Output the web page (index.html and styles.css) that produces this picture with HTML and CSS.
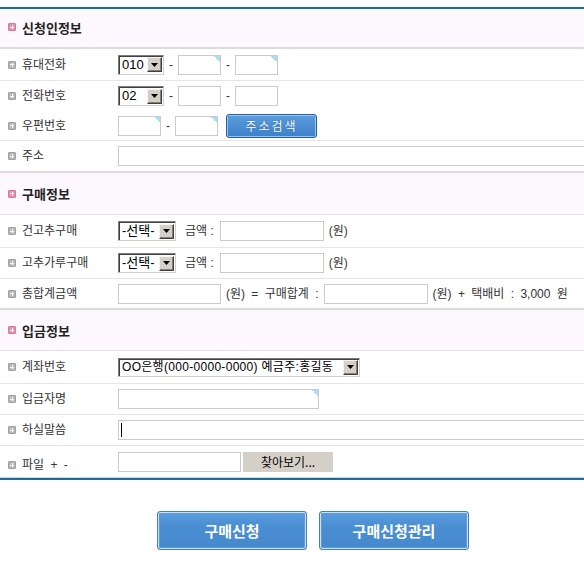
FILE: index.html
```html
<!DOCTYPE html>
<html lang="ko">
<head>
<meta charset="utf-8">
<title>구매신청</title>
<link rel="stylesheet" href="styles.css">
</head>
<body>
<div class="page">
  <div class="form">
    <div class="sec-head sh1"><span class="ico pink"></span>신청인정보</div>

    <div class="row h32 line">
      <div class="label"><span class="ico"></span>휴대전화</div>
      <div class="field">
        <div class="sel w46"><span class="sel-text">010</span><span class="arrow"><svg width="7" height="4" viewBox="0 0 7 4"><path d="M0 0h7L3.5 4z" fill="#000"/></svg></span></div>
        <span class="dash">-</span>
        <input class="inp w43 tri" type="text">
        <span class="dash">-</span>
        <input class="inp w43 tri" type="text">
      </div>
    </div>

    <div class="row h30">
      <div class="label"><span class="ico"></span>전화번호</div>
      <div class="field">
        <div class="sel w46"><span class="sel-text">02</span><span class="arrow"><svg width="7" height="4" viewBox="0 0 7 4"><path d="M0 0h7L3.5 4z" fill="#000"/></svg></span></div>
        <span class="dash">-</span>
        <input class="inp w43" type="text">
        <span class="dash">-</span>
        <input class="inp w43" type="text">
      </div>
    </div>

    <div class="row h30 line">
      <div class="label"><span class="ico"></span>우편번호</div>
      <div class="field">
        <input class="inp w43 tri" type="text">
        <span class="dash">-</span>
        <input class="inp w43 tri" type="text">
        <button class="btn-zip" type="button">주소검색</button>
      </div>
    </div>

    <div class="row h32 line2">
      <div class="label"><span class="ico"></span>주소</div>
      <div class="field">
        <input class="inp wlong" type="text">
      </div>
    </div>

    <div class="sec-head sh2"><span class="ico pink"></span>구매정보</div>

    <div class="row h33 line">
      <div class="label"><span class="ico"></span>건고추구매</div>
      <div class="field">
        <div class="sel w58"><span class="sel-text">-선택-</span><span class="arrow"><svg width="7" height="4" viewBox="0 0 7 4"><path d="M0 0h7L3.5 4z" fill="#000"/></svg></span></div>
        <span class="txt amt">금액 :</span>
        <input class="inp w104" type="text">
        <span class="txt won">(원)</span>
      </div>
    </div>

    <div class="row h31 line">
      <div class="label"><span class="ico"></span>고추가루구매</div>
      <div class="field">
        <div class="sel w58"><span class="sel-text">-선택-</span><span class="arrow"><svg width="7" height="4" viewBox="0 0 7 4"><path d="M0 0h7L3.5 4z" fill="#000"/></svg></span></div>
        <span class="txt amt">금액 :</span>
        <input class="inp w104" type="text">
        <span class="txt won">(원)</span>
      </div>
    </div>

    <div class="row h31 line2">
      <div class="label"><span class="ico"></span>총합계금액</div>
      <div class="field">
        <input class="inp w103" type="text">
        <span class="txt sum wide">(원) = 구매합계 :</span>
        <input class="inp w104" type="text">
        <span class="txt won wide">(원) + 택배비 : 3,000 원</span>
      </div>
    </div>

    <div class="sec-head sh3"><span class="ico pink"></span>입금정보</div>

    <div class="row h33 line">
      <div class="label"><span class="ico"></span>계좌번호</div>
      <div class="field">
        <div class="sel w242 h19"><span class="sel-text acct">OO은행(000-0000-0000) 예금주:홍길동</span><span class="arrow"><svg width="7" height="4" viewBox="0 0 7 4"><path d="M0 0h7L3.5 4z" fill="#000"/></svg></span></div>
      </div>
    </div>

    <div class="row h31 line">
      <div class="label"><span class="ico"></span>입금자명</div>
      <div class="field">
        <input class="inp w201 tri" type="text">
      </div>
    </div>

    <div class="row h31 line">
      <div class="label"><span class="ico"></span>하실말씀</div>
      <div class="field">
        <div class="inp wlong memo"><span class="caret"></span></div>
      </div>
    </div>

    <div class="row h32 last">
      <div class="label low wide"><span class="ico"></span>파일 + -</div>
      <div class="field">
        <input class="inp w123" type="text">
        <button class="btn-find" type="button">찾아보기...</button>
      </div>
    </div>
  </div>

  <div class="actions">
    <button class="btn-big" type="button">구매신청</button>
    <button class="btn-big" type="button">구매신청관리</button>
  </div>
</div>
</body>
</html>
```

FILE: styles.css
```css
html, body {
  margin: 0;
  padding: 0;
  overflow: hidden;
  background: #fff;
}

.page {
  width: 584px;
  overflow: hidden;
  padding-top: 7px;
  font-family: "Liberation Sans", "Noto Sans CJK KR", sans-serif;
  font-size: 12px;
  color: #333;
}

.form {
  width: 626px;
  border-top: 2px solid #1b6e97;
  border-bottom: 2px solid #1b6e97;
}

.sec-head {
  display: flex;
  align-items: center;
  box-sizing: border-box;
  padding-left: 8px;
  background: #fdf8fd;
  font-size: 13px;
  font-weight: bold;
  color: #222;
}

.sh1 { height: 40px; border-bottom: 2px solid #dddada; padding-bottom: 2px; }
.sh2 { height: 42px; border-bottom: 1px solid #e2e0e2; }
.sh3 { height: 41px; border-bottom: 1px solid #e2e0e2; }

.ico {
  display: inline-block;
  box-sizing: border-box;
  width: 8px;
  height: 8px;
  margin-right: 6px;
  background: #b8b8b8;
  border: 1px solid #a0a0a0;
  border-radius: 1px;
  position: relative;
  flex: none;
}
.ico::before, .ico::after {
  content: "";
  position: absolute;
  background: #fff;
}
.ico::before { left: 1px; top: 2.5px; width: 4px; height: 1px; }
.ico::after { left: 2.5px; top: 1px; width: 1px; height: 4px; }
.ico.pink { background: #ec8fad; border-color: #d9789a; }

.row {
  display: flex;
  align-items: center;
  box-sizing: border-box;
}
.h30 { height: 30px; }
.h31 { height: 31px; }
.h32 { height: 32px; }
.h33 { height: 33px; }
.line { border-bottom: 1px solid #e6e6e6; }
.line2 { border-bottom: 2px solid #dadada; }
.last { border-bottom: 1px solid #d4d4d4; }

.label {
  width: 118px;
  flex: none;
  box-sizing: border-box;
  padding-left: 8px;
  display: flex;
  align-items: center;
  line-height: 16px;
  white-space: pre;
}
.label.low { padding-top: 7px; }
.wide { word-spacing: 3px; }

.field {
  display: flex;
  align-items: center;
  flex: 1;
  line-height: 16px;
}

.sel {
  display: inline-flex;
  align-items: center;
  box-sizing: border-box;
  height: 20px;
  border: 1px solid;
  border-color: #7d7d7d #d4d0c8 #d4d0c8 #7d7d7d;
  box-shadow: inset 1px 1px 0 #404040;
  background: #fff;
  padding: 1px 1px 1px 3px;
  color: #000;
}
.sel.h19 { height: 19px; }
.sel-text {
  flex: 1;
  white-space: nowrap;
  font-size: 13px;
  line-height: 14px;
  overflow: hidden;
}
.sel-text.acct { font-size: 12px; letter-spacing: 0.3px; }
.arrow {
  width: 15px;
  height: 15px;
  flex: none;
  box-sizing: border-box;
  background: #d4d0c8;
  border: 1px solid;
  border-color: #f4f3ef #404040 #404040 #f4f3ef;
  box-shadow: inset -1px -1px 0 #808080;
  display: flex;
  align-items: center;
  justify-content: center;
}

.w46 { width: 46px; }
.w58 { width: 58px; }
.w242 { width: 242px; }

.inp {
  box-sizing: border-box;
  height: 20px;
  margin: 0;
  padding: 0 3px;
  border: 1px solid #cbcbcb;
  background: #fff;
  font: inherit;
  outline: none;
}
.inp.tri {
  background: linear-gradient(to bottom left, #a9ddf4 50%, transparent 50%) no-repeat right top / 6px 6px, #fff;
}
.w43 { width: 43px; }
.w103 { width: 103px; }
.w104 { width: 104px; }
.w123 { width: 123px; }
.w201 { width: 201px; }
.wlong { width: 500px; }

.memo {
  display: flex;
  align-items: center;
  padding-left: 2px;
}
.caret {
  width: 1px;
  height: 14px;
  background: #000;
}

.dash {
  width: 14px;
  text-align: center;
  color: #333;
}

.txt { white-space: nowrap; }
.amt { margin-left: 9px; margin-right: 6px; }
.won { margin-left: 5px; }
.sum { margin-left: 5px; margin-right: 5px; }

.btn-zip {
  margin-left: 8px;
  box-sizing: border-box;
  width: 91px;
  height: 24px;
  padding: 0;
  border: 1px solid #1f5fa6;
  border-radius: 3px;
  box-shadow: inset 0 0 0 1px #9cc4ec;
  background: linear-gradient(#5b9ddc, #3d80c8);
  color: #fff;
  font-family: "Noto Sans CJK KR", sans-serif;
  font-size: 12px;
  letter-spacing: 2px;
  text-shadow: 0 0 1px #1a4f8a;
  line-height: 20px;
}

.btn-find {
  margin-left: 2px;
  box-sizing: border-box;
  width: 90px;
  height: 20px;
  padding: 0;
  border: 1px solid #d4d0c8;
  background: #d4d0c8;
  color: #000;
  font-family: "Noto Sans CJK KR", sans-serif;
  font-size: 12px;
  line-height: 16px;
}

.actions {
  width: 626px;
  display: flex;
  justify-content: center;
  gap: 12px;
  margin-top: 31px;
}
.btn-big {
  box-sizing: border-box;
  width: 150px;
  height: 39px;
  padding: 0;
  border: 1px solid #3f7fc2;
  border-radius: 3px;
  box-shadow: inset 0 0 0 1px #cfe2f5, inset 0 0 0 2px #5a9bdc;
  background: linear-gradient(#5a9edf 0, #4a8ed2 40%, #4788cc 100%);
  color: #fff;
  font-family: "Noto Sans CJK KR", sans-serif;
  font-size: 15px;
  font-weight: bold;
  line-height: 20px;
}
```
